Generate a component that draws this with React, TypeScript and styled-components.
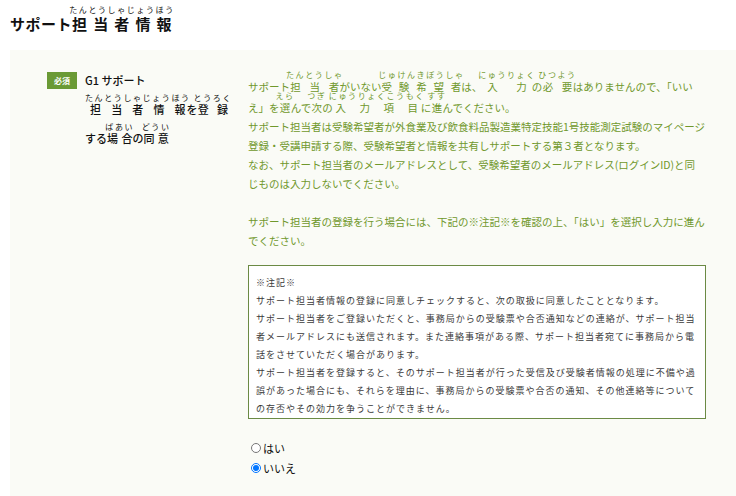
import React, { useState } from "react";
import styled, { createGlobalStyle } from "styled-components";

const GlobalStyle = createGlobalStyle`
  body {
    margin: 0;
    background: #fff;
    font-family: "Noto Sans CJK JP", "Noto Sans", sans-serif;
    color: #111;
  }
`;

const Page = styled.div`
  padding: 7px 0 0 10px;
`;

const Title = styled.h2`
  margin: 0 0 13px;
  font-size: 15px;
  font-weight: 700;
  line-height: 26px;
  color: #111;
  letter-spacing: 0.5px;
`;

/* furigana sits a touch higher above its kanji */
const Rt = styled.rt`
  position: relative;
  top: -2px;
  font-size: 8px;
  font-weight: 400;
  letter-spacing: 1.6px;
  color: inherit;
`;

const Panel = styled.section`
  background: #fafbf6;
  padding: 22px 0 40px 37px;
  display: grid;
  grid-template-columns: 201px 458px;
  min-height: 420px;
`;

const LabelCell = styled.div`
  display: flex;
  align-items: flex-start;
  gap: 8px;
`;

const Badge = styled.span`
  flex: none;
  width: 30px;
  height: 17px;
  background: #6a9a35;
  color: #fff;
  font-size: 8px;
  font-weight: 700;
  display: flex;
  align-items: center;
  justify-content: center;
`;

const LabelText = styled.div`
  width: 148px;
  font-size: 11px;
  font-weight: 500;
  color: #111;
`;

const LabelHead = styled.div`
  line-height: 20px;
  margin-top: -2px;
`;

const LabelBody = styled.div`
  line-height: 29px;
  margin-top: 5px;
`;

const Content = styled.div`
  color: #70982c;
  font-size: 10.5px;
  line-height: 19px;
`;

const Para = styled.p<{ $gap?: number }>`
  margin: ${(p) => p.$gap ?? 0}px 0 0;
`;

const Notice = styled.div`
  margin-top: 15px;
  width: 458px;
  box-sizing: border-box;
  background: #fff;
  border: 1px solid #6b8a44;
  padding: 8px 8px 0 7px;
  color: #3a3a3a;
  font-size: 9px;
  letter-spacing: 1px;
  line-height: 18px;
`;

const Choices = styled.div`
  margin-top: 21px;
  display: flex;
  flex-direction: column;
  gap: 4px;
  color: #111;
  font-size: 11px;
`;

const Choice = styled.label`
  display: flex;
  align-items: center;
  gap: 2px;
  line-height: 16px;
  cursor: pointer;
`;

const Radio = styled.input`
  width: 10px;
  height: 10px;
  margin: 0 0 0 3px;
`;

const R = ({ b, r }: { b: string; r: string }) => (
  <ruby>
    {b}
    <Rt>{r}</Rt>
  </ruby>
);

export default function App() {
  const [answer, setAnswer] = useState("no");

  return (
    <Page>
      <GlobalStyle />
      <Title>
        サポート<R b="担当者情報" r="たんとうしゃじょうほう" />
      </Title>

      <Panel>
        <LabelCell>
          <Badge>必須</Badge>
          <LabelText>
            <LabelHead>G1 サポート</LabelHead>
            <LabelBody>
              <R b="担当者情報" r="たんとうしゃじょうほう" />を
              <R b="登録" r="とうろく" />する
              <R b="場合" r="ばあい" />の<R b="同意" r="どうい" />
            </LabelBody>
          </LabelText>
        </LabelCell>

        <Content>
          <Para>
            サポート<R b="担当者" r="たんとうしゃ" />がいない
            <R b="受験希望者" r="じゅけんきぼうしゃ" />は、
            <R b="入力" r="にゅうりょく" />の<R b="必要" r="ひつよう" />
            はありませんので、「いいえ」を<R b="選" r="えら" />んで
            <R b="次" r="つぎ" />の<R b="入力項目" r="にゅうりょくこうもく" />に
            <R b="進" r="すす" />んでください。
          </Para>
          <Para>
            サポート担当者は受験希望者が外食業及び飲食料品製造業特定技能1号技能測定試験のマイページ登録・受講申請する際、受験希望者と情報を共有しサポートする第３者となります。
          </Para>
          <Para>
            なお、サポート担当者のメールアドレスとして、受験希望者のメールアドレス(ログインID)と同
            <br />
            じものは入力しないでください。
          </Para>
          <Para $gap={19}>
            サポート担当者の登録を行う場合には、下記の※注記※を確認の上、「はい」を選択し入力に進んでください。
          </Para>

          <Notice>
            <div>※注記※</div>
            <div>サポート担当者情報の登録に同意しチェックすると、次の取扱に同意したこととなります。</div>
            <div>
              サポート担当者をご登録いただくと、事務局からの受験票や合否通知などの連絡が、サポート担当者メールアドレスにも送信されます。また連絡事項がある際、サポート担当者宛てに事務局から電話をさせていただく場合があります。
            </div>
            <div>
              サポート担当者を登録すると、そのサポート担当者が行った受信及び受験者情報の処理に不備や過誤があった場合にも、それらを理由に、事務局からの受験票や合否の通知、その他連絡等についての存否やその効力を争うことができません。
            </div>
          </Notice>

          <Choices>
            <Choice>
              <Radio
                type="radio"
                name="support"
                checked={answer === "yes"}
                onChange={() => setAnswer("yes")}
              />
              はい
            </Choice>
            <Choice>
              <Radio
                type="radio"
                name="support"
                checked={answer === "no"}
                onChange={() => setAnswer("no")}
              />
              いいえ
            </Choice>
          </Choices>
        </Content>
      </Panel>
    </Page>
  );
}
